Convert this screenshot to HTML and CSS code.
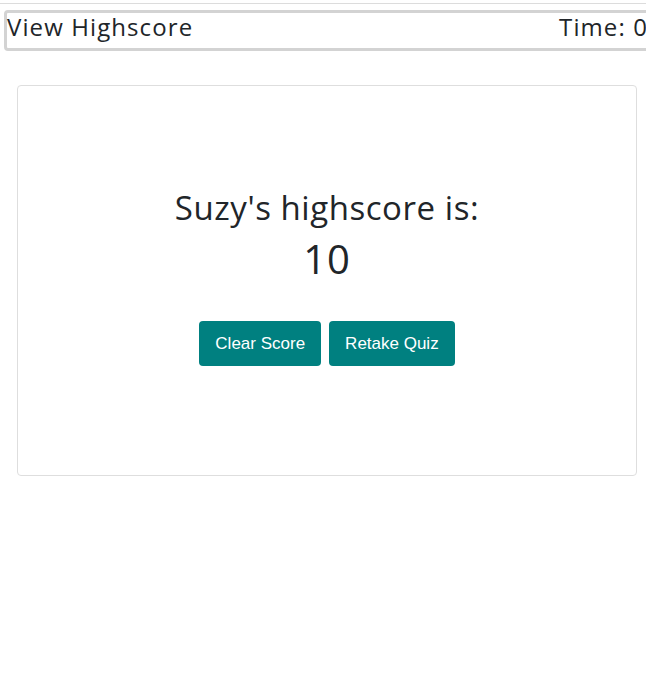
FILE: index.html
```html
<!DOCTYPE html>
<html lang="en">
<head>
<meta charset="utf-8">
<title>Highscore</title>
<link rel="stylesheet" href="styles.css">
</head>
<body>
<div class="topline"></div>
<header class="navbar">
  <span class="nav-link">View Highscore</span>
  <span class="timer">Time: 0</span>
</header>
<main class="card">
  <h2 class="score-title">Suzy's highscore is:</h2>
  <p class="score-value">10</p>
  <div class="actions">
    <button class="btn">Clear Score</button>
    <button class="btn">Retake Quiz</button>
  </div>
</main>
</body>
</html>
```
FILE: styles.css
```css
html, body {
  margin: 0;
  padding: 0;
  background: #fff;
  overflow: hidden;
}
body {
  width: 646px;
  font-family: "Open Sans", "Liberation Sans", sans-serif;
  color: #212529;
}
.topline {
  height: 1px;
  background: #dcdcdc;
  margin-top: 3px;
}
.navbar {
  display: flex;
  justify-content: space-between;
  align-items: center;
  box-sizing: border-box;
  width: 660px;
  height: 41px;
  margin: 6px 0 0 4px;
  border: 3px solid #d3d3d3;
  border-radius: 4px;
  padding: 0 13px 7px 0;
  font-size: 24px;
  letter-spacing: 1.1px;
  line-height: 1;
}
.nav-link { color: #212529; }
.timer { color: #212529; }
.card {
  box-sizing: border-box;
  width: 620px;
  height: 391px;
  margin: 34px 0 0 17px;
  border: 1px solid #dedede;
  border-radius: 4px;
  display: flex;
  flex-direction: column;
  align-items: center;
  padding-top: 102px;
}
.score-title {
  margin: 0;
  font-weight: 400;
  font-size: 33px;
  letter-spacing: 0.55px;
  line-height: 40px;
}
.score-value {
  margin: 7px 0 0;
  font-size: 40px;
  letter-spacing: 1px;
  line-height: 48px;
}
.actions {
  display: flex;
  gap: 8px;
  margin-top: 38px;
}
.btn {
  font-family: "Liberation Sans", Arial, sans-serif;
  font-size: 17px;
  color: #fff;
  background: #008080;
  border: 0;
  border-radius: 4px;
  height: 45px;
  padding: 0 16px;
}
```
